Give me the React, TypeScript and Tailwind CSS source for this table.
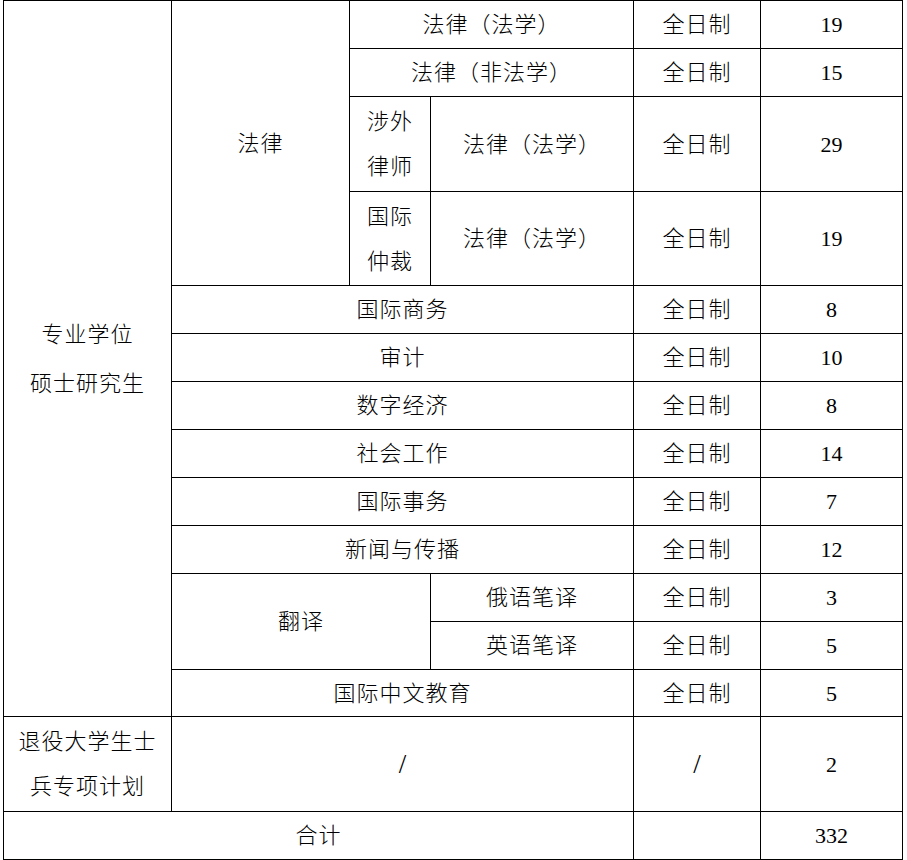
const cell = 'border border-black text-center align-middle p-0';
const zh = `${cell} text-[22px] font-light tracking-[1px] leading-[45px]`;
const num = `${cell} text-[22px] leading-[45px]`;
const slash = `${cell} text-[27px] font-light leading-[45px]`;

type Row = { name: string; count: string };

const singles: Row[] = [
  { name: '国际商务', count: '8' },
  { name: '审计', count: '10' },
  { name: '数字经济', count: '8' },
  { name: '社会工作', count: '14' },
  { name: '国际事务', count: '7' },
  { name: '新闻与传播', count: '12' },
];

export default function App() {
  return (
    <div className="bg-white min-h-[860px] pl-[3px] text-black font-['Liberation_Serif','Noto_Sans_CJK_SC',serif]">
      <table className="table-fixed border-collapse w-[899px]">
        <colgroup>
          <col className="w-[168px]" />
          <col className="w-[178px]" />
          <col className="w-[81px]" />
          <col className="w-[203px]" />
          <col className="w-[127px]" />
          <col className="w-[142px]" />
        </colgroup>
        <tbody>
          <tr className="h-[48px]">
            <td rowSpan={13} className={`${zh} leading-[49px]`}>
              专业学位
              <br />
              硕士研究生
            </td>
            <td rowSpan={4} className={zh}>
              法律
            </td>
            <td colSpan={2} className={zh}>
              法律（法学）
            </td>
            <td className={zh}>全日制</td>
            <td className={num}>19</td>
          </tr>
          <tr className="h-[48px]">
            <td colSpan={2} className={zh}>
              法律（非法学）
            </td>
            <td className={zh}>全日制</td>
            <td className={num}>15</td>
          </tr>
          <tr className="h-[95px]">
            <td className={zh}>
              涉外
              <br />
              律师
            </td>
            <td className={zh}>法律（法学）</td>
            <td className={zh}>全日制</td>
            <td className={num}>29</td>
          </tr>
          <tr className="h-[94px]">
            <td className={zh}>
              国际
              <br />
              仲裁
            </td>
            <td className={zh}>法律（法学）</td>
            <td className={zh}>全日制</td>
            <td className={num}>19</td>
          </tr>
          {singles.map((r) => (
            <tr key={r.name} className="h-[48px]">
              <td colSpan={3} className={zh}>
                {r.name}
              </td>
              <td className={zh}>全日制</td>
              <td className={num}>{r.count}</td>
            </tr>
          ))}
          <tr className="h-[48px]">
            <td colSpan={2} rowSpan={2} className={zh}>
              翻译
            </td>
            <td className={zh}>俄语笔译</td>
            <td className={zh}>全日制</td>
            <td className={num}>3</td>
          </tr>
          <tr className="h-[48px]">
            <td className={zh}>英语笔译</td>
            <td className={zh}>全日制</td>
            <td className={num}>5</td>
          </tr>
          <tr className="h-[47px]">
            <td colSpan={3} className={zh}>
              国际中文教育
            </td>
            <td className={zh}>全日制</td>
            <td className={num}>5</td>
          </tr>
          <tr className="h-[95px]">
            <td className={zh}>
              退役大学生士
              <br />
              兵专项计划
            </td>
            <td colSpan={3} className={slash}>
              /
            </td>
            <td className={slash}>/</td>
            <td className={num}>2</td>
          </tr>
          <tr className="h-[48px]">
            <td colSpan={4} className={zh}>
              合计
            </td>
            <td className={num}></td>
            <td className={num}>332</td>
          </tr>
        </tbody>
      </table>
    </div>
  );
}
